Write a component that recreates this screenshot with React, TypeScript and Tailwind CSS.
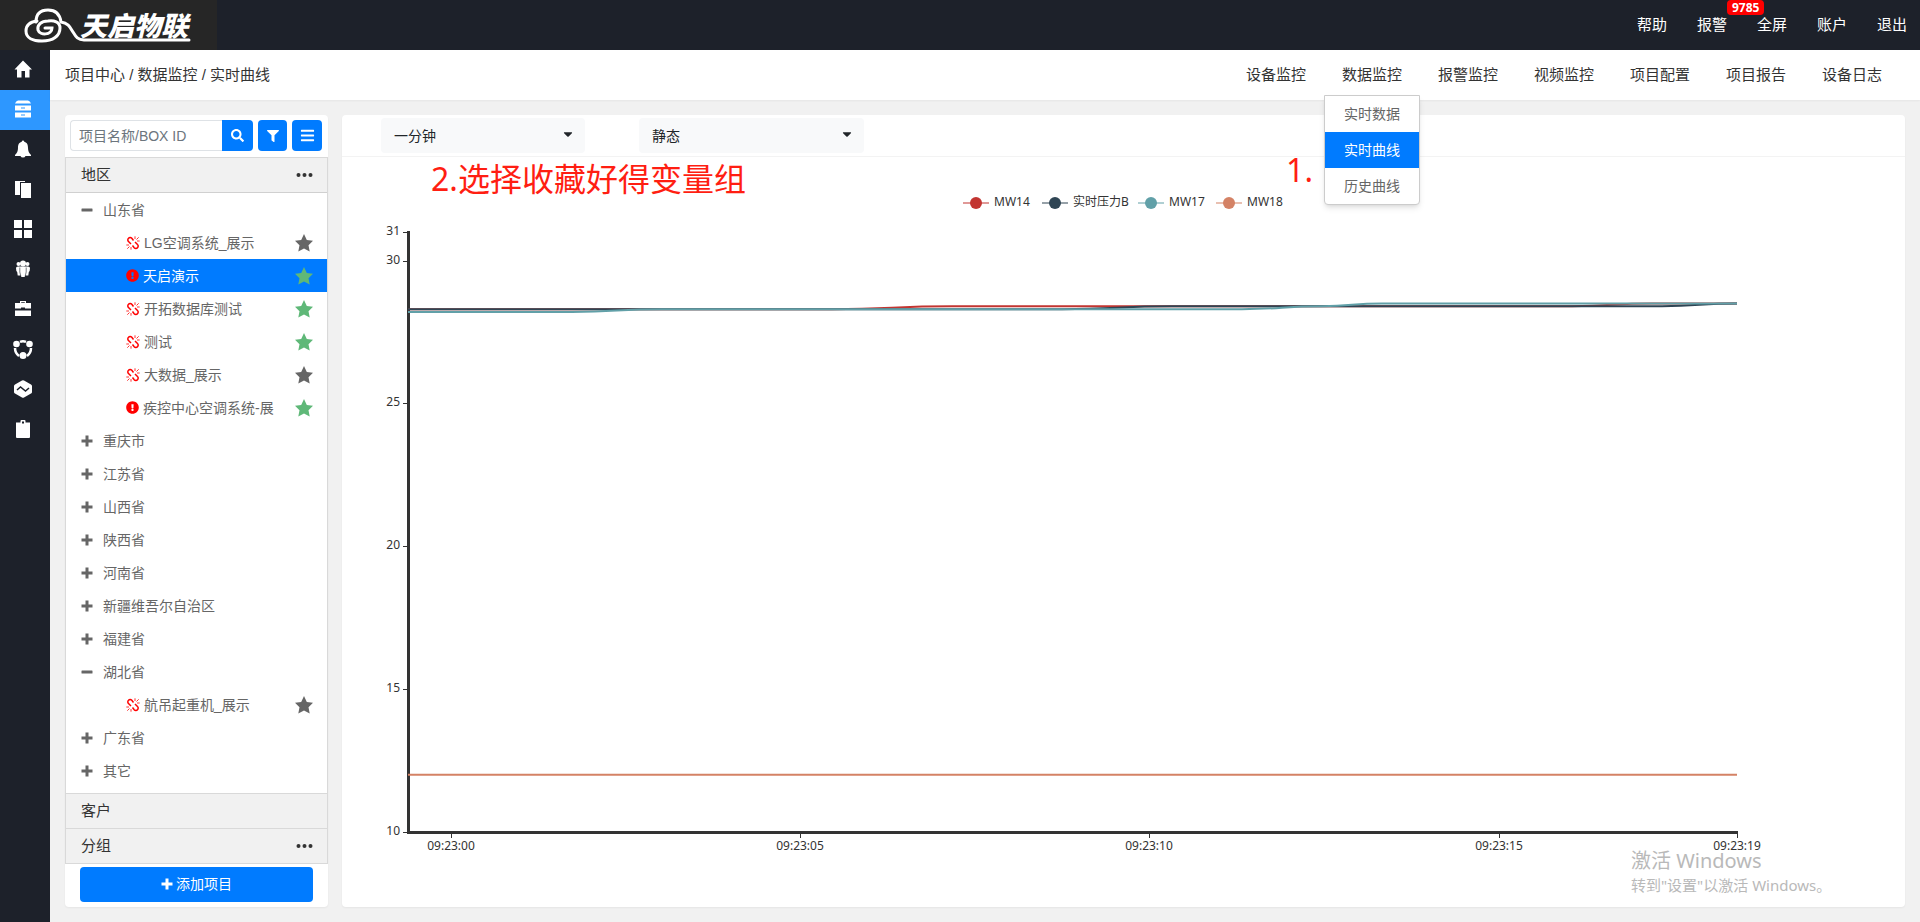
import { useState, type ReactNode } from 'react'
import { FaBars, FaCaretDown, FaExclamationCircle, FaFilter, FaSearch } from 'react-icons/fa'

interface Project { name: string; status: 'offline' | 'alarm'; starred: boolean }
interface Region { name: string; projects?: Project[] }
interface Series { name: string; color: string; points: [number, number][] }

const regions: Region[] = [
  {
    name: '山东省',
    projects: [
      { name: 'LG空调系统_展示', status: 'offline', starred: false },
      { name: '天启演示', status: 'alarm', starred: true },
      { name: '开拓数据库测试', status: 'offline', starred: true },
      { name: '测试', status: 'offline', starred: true },
      { name: '大数据_展示', status: 'offline', starred: false },
      { name: '疾控中心空调系统-展', status: 'alarm', starred: true },
    ],
  },
  { name: '重庆市' },
  { name: '江苏省' },
  { name: '山西省' },
  { name: '陕西省' },
  { name: '河南省' },
  { name: '新疆维吾尔自治区' },
  { name: '福建省' },
  { name: '湖北省', projects: [{ name: '航吊起重机_展示', status: 'offline', starred: false }] },
  { name: '广东省' },
  { name: '其它' },
]

const topLinks = ['帮助', '报警', '全屏', '账户', '退出']
const navLinks = ['设备监控', '数据监控', '报警监控', '视频监控', '项目配置', '项目报告', '设备日志']
const dataMenu = ['实时数据', '实时曲线', '历史曲线']

// [x, value]
const series: Series[] = [
  { name: 'MW14', color: '#c23531', points: [[66, 28.3], [490, 28.3], [610, 28.4], [1230, 28.4], [1310, 28.5], [1395, 28.5]] },
  { name: '实时压力B', color: '#2f4554', points: [[66, 28.3], [720, 28.3], [830, 28.4], [1320, 28.4], [1395, 28.5]] },
  { name: 'MW17', color: '#61a0a8', points: [[66, 28.2], [230, 28.2], [320, 28.3], [900, 28.3], [980, 28.4], [1040, 28.5], [1395, 28.5]] },
  { name: 'MW18', color: '#d48265', points: [[66, 12], [1395, 12]] },
]
const yTicks = [31, 30, 25, 20, 15, 10]
const xTicks: [number, string][] = [[109, '09:23:00'], [458, '09:23:05'], [807, '09:23:10'], [1157, '09:23:15'], [1395, '09:23:19']]
const legendX = [621, 700, 796, 874]

const toY = (v: number) => 675 - ((v - 10) * 600) / 21

function smoothPath(points: [number, number][]) {
  return points
    .map(([x, v], i) => {
      if (i === 0) return `M${x} ${toY(v)}`
      const [px, pv] = points[i - 1]
      const mid = (px + x) / 2
      return `C${mid} ${toY(pv)} ${mid} ${toY(v)} ${x} ${toY(v)}`
    })
    .join('')
}

function Logo() {
  return (
    <svg viewBox="0 0 217 50" className="h-[50px] w-[217px] bg-[#262626]" role="img" aria-label="天启物联">
      <g fill="none" stroke="#fff" strokeWidth="3" strokeLinecap="round">
        <path d="M36 22C36 13 41 10 48 10C56 10 60 15 61 22C68 23 70 27 73 32C76 37 78 40 84 40H189" />
        <path d="M37 21C29 22 26 26 26 31C26 38 33 41 42 41C53 41 60 36 60 28C60 22 54 20 48 21C41 21 37 25 38 30C40 36 52 35 52 28H45" />
      </g>
      <text x="80" y="36" fill="#fff" fontSize="27" fontWeight="900" fontStyle="italic" className="font-['Noto_Sans_CJK_SC',sans-serif]">天启物联</text>
    </svg>
  )
}

function PlusIcon() {
  return (
    <svg viewBox="0 0 12 12" className="size-3" fill="currentColor">
      <path d="M4.500.5h3v4h4v3h-4v4h-3v-4h-4v-3h4Z" />
    </svg>
  )
}

function MinusIcon() {
  return (
    <svg viewBox="0 0 12 12" className="size-3" fill="currentColor">
      <rect x=".5" y="4.500" width="11" height="3" rx=".5" />
    </svg>
  )
}

function DotsIcon() {
  return (
    <svg viewBox="0 0 17 6" className="h-[6px] w-[17px]" fill="currentColor">
      <circle cx="2.500" cy="3" r="2" />
      <circle cx="8.500" cy="3" r="2" />
      <circle cx="14.500" cy="3" r="2" />
    </svg>
  )
}

function StarIcon({ className }: { className: string }) {
  return (
    <svg viewBox="0 0 18 18" className={`size-[18px] ${className}`} fill="currentColor">
      <path d="M9 0 11.800 5.900 18 6.700 13.500 11.200 14.700 17.500 9 14.500 3.300 17.500 4.500 11.200 0 6.700 6.200 5.900Z" />
    </svg>
  )
}

function BrokenLinkIcon() {
  return (
    <svg viewBox="0 0 14 14" className="size-[14px] text-[#f00]" fill="none" stroke="currentColor">
      <path d="M7.500 4.500 5.800 2.300a2.200 2.200 0 0 0-3.300 0 2.200 2.200 0 0 0 0 3.200L5 8M6.500 9.500l1.700 2.200a2.200 2.200 0 0 0 3.300 0 2.200 2.200 0 0 0 0-3.200L9 6" strokeWidth="1.500" />
      <path d="M9 3V.3M10.500 3.500l2.200-2.200M11 5h2.700M5 11v2.700M3.500 10.500l-2.200 2.200M3 9H.3" strokeWidth=".8" />
    </svg>
  )
}

const sideIcons: { label: string; icon: ReactNode }[] = [
  { label: '首页', icon: <path d="M9 .5 18 9.500H15.500V17.500H11V11H7.500V17.500H3V9.500H.5Z" /> },
  {
    label: '项目',
    icon: (
      <>
        <path d="M4 .5h10q2 .5 3 3H1q1-2.500 3-3ZM1 5.500h16v5H1ZM1 12.500h16v5H1Z" />
        <path d="M7 7.500h4v1H7ZM7 14.500h4v1H7Z" fill="#2d97ff" />
      </>
    ),
  },
  { label: '报警', icon: <path d="M9 .5q1 0 1.300 1.200c3 .8 3.700 3.300 3.700 6.300 0 3 1 5 3 7v1h-5.500q-.5 1.500-2.500 1.500t-2.500-1.500H1v-1c2-2 3-4 3-7 0-3 .7-5.500 3.700-6.300Q8 .5 9 .5Z" /> },
  { label: '文件', icon: <path d="M1 1h10v1H6v13H1ZM7 3h10v15H7Z" /> },
  { label: '应用', icon: <path d="M0 0h8v8H0ZM10 0h8v8h-8ZM0 10h8v8H0ZM10 10h8v8h-8Z" /> },
  {
    label: '用户',
    icon: (
      <>
        <circle cx="4.500" cy="4" r="2" />
        <circle cx="13.500" cy="4" r="2" />
        <path d="M2 8q0-1.500 2-1.500H14q2 0 2 1.500 0 3-1.200 4L14.300 15.500H11V17H7v-1.500H3.700L3.200 12Q2 11 2 8Z" />
        <circle cx="9" cy="3.500" r="3" />
        <path d="M5.800 7.500V12l1.200 5M12.200 7.500V12L11 17" stroke="#1d212a" strokeWidth=".6" fill="none" />
      </>
    ),
  },
  { label: '工具', icon: <path fillRule="evenodd" d="M6 3V1h6v2h5v5.500h-6V7.500H7v1H1V3ZM7.200 3h3.600v-.8H7.200ZM1 10.500h16V16H1Z" /> },
  {
    label: '共享',
    icon: (
      <>
        <path d="M6 1.800Q9 .5 12 1.800M1 8q0 5 4 8M17 8q0 5-4 8" fill="none" stroke="currentColor" strokeWidth="2.500" />
        <circle cx="2.500" cy="4" r="3.300" />
        <circle cx="15.500" cy="4" r="3.300" />
        <circle cx="9" cy="15.500" r="3.500" />
      </>
    ),
  },
  {
    label: '趋势',
    icon: (
      <>
        <path d="M8 .5q1-.5 2 0l7 4q1 .5 1 1.500v6q0 1-1 1.500l-7 4q-1 .5-2 0l-7-4Q0 13 0 12V6q0-1 1-1.500Z" />
        <path d="M3 10 6.500 7l5 4L15 8" fill="none" stroke="#1d212a" strokeWidth="1.500" />
      </>
    ),
  },
  { label: '记录', icon: <path fillRule="evenodd" d="M2 2.500h4.500V1Q6.500 0 7.500 0h3q1 0 1 1v1.500H16V17q0 1-1 1H3q-1 0-1-1ZM8 1.500v2h2v-2Z" /> },
]

function SideBar() {
  return (
    <nav aria-label="主菜单" className="w-[50px] shrink-0 bg-[#1d212a]">
      {sideIcons.map((item, i) => (
        <a
          key={item.label}
          href="#"
          aria-label={item.label}
          className={`flex h-10 items-center justify-center pr-1 pb-[2px] text-white ${i === 1 ? 'bg-[#2d97ff]' : ''}`}
        >
          <svg viewBox="0 0 18 18" className="size-[18px] overflow-visible" fill="currentColor">{item.icon}</svg>
        </a>
      ))}
    </nav>
  )
}

function SubBar() {
  return (
    <div className="relative z-10 flex h-[50px] items-center justify-between bg-white pr-5 pl-[15px] text-[15px] text-[#333] shadow-xs">
      <div>项目中心 / 数据监控 / 实时曲线</div>
      <nav aria-label="项目" className="flex">
        {navLinks.map((name, i) => (
          <div key={name} className="relative w-24 text-center">
            <a href="#">{name}</a>
            {i === 1 && (
              <ul className="absolute top-[31px] left-0 w-full rounded-b border border-[#ccc] bg-white text-sm text-[#666] shadow-md">
                {dataMenu.map((m, j) => (
                  <li key={m}>
                    <a href="#" className={`flex h-9 items-center justify-center ${j === 1 ? 'bg-[#007bff] text-white' : ''}`}>{m}</a>
                  </li>
                ))}
              </ul>
            )}
          </div>
        ))}
      </nav>
    </div>
  )
}

function ProjectRow({ project, selected, onSelect }: { project: Project; selected: boolean; onSelect: () => void }) {
  return (
    <li className={`flex h-[33px] items-center pr-[14px] ${selected ? 'bg-[#007bff] text-white' : ''}`}>
      <button type="button" onClick={onSelect} className="flex flex-1 items-center gap-1 pl-[60px] text-left">
        {project.status === 'offline' ? <BrokenLinkIcon /> : <FaExclamationCircle size={13} className="text-[#f00]" />}
        {project.name}
      </button>
      <button type="button" aria-label="收藏">
        <StarIcon className={project.starred ? 'text-[#5fb878]' : 'text-[#666]'} />
      </button>
    </li>
  )
}

function ProjectPanel() {
  const [selected, setSelected] = useState('天启演示')
  const [open, setOpen] = useState(['山东省', '湖北省'])
  const toggle = (name: string) => setOpen(o => (o.includes(name) ? o.filter(n => n !== name) : [...o, name]))

  return (
    <aside className="flex w-[263px] shrink-0 flex-col rounded-sm bg-white shadow-xs">
      <div className="flex gap-[5px] p-[5px] pb-[6px]">
        <div className="flex h-[31px] w-[183px]">
          <input
            aria-label="项目名称"
            placeholder="项目名称/BOX ID"
            className="min-w-0 flex-1 rounded-l border border-r-0 border-[#dee2e6] px-2 text-sm placeholder:text-[#6c757d]"
          />
          <button type="button" aria-label="搜索" className="flex w-[31px] items-center justify-center rounded-r bg-[#007bff] text-white">
            <FaSearch size={13} />
          </button>
        </div>
        <button type="button" aria-label="筛选" className="flex h-[31px] w-[29px] items-center justify-center rounded bg-[#007bff] text-white">
          <FaFilter size={12} />
        </button>
        <button type="button" aria-label="列表" className="flex h-[31px] w-[30px] items-center justify-center rounded bg-[#007bff] text-white">
          <FaBars size={15} />
        </button>
      </div>

      <div className="flex flex-1 flex-col border border-[#d9d9d9]">
        <div className="flex h-[35px] items-center justify-between border-b border-[#d0d0d0] bg-[#f1f1f1] pr-[14px] pl-[15px] text-[15px] text-[#333]">
          <button type="button">地区</button>
          <button type="button" aria-label="更多"><DotsIcon /></button>
        </div>
        <ul className="flex-1 text-sm text-[#666]">
          {regions.map(region => (
            <li key={region.name}>
              <button type="button" onClick={() => toggle(region.name)} className="flex h-[33px] w-full items-center gap-[10px] pl-[15px]">
                {open.includes(region.name) ? <MinusIcon /> : <PlusIcon />}
                {region.name}
              </button>
              {open.includes(region.name) && region.projects && (
                <ul>
                  {region.projects.map(p => (
                    <ProjectRow key={p.name} project={p} selected={p.name === selected} onSelect={() => setSelected(p.name)} />
                  ))}
                </ul>
              )}
            </li>
          ))}
        </ul>
        <div className="flex h-[35px] items-center border-t border-[#d9d9d9] bg-[#f1f1f1] pl-[15px] text-[15px] text-[#333]">
          <button type="button">客户</button>
        </div>
        <div className="flex h-[35px] items-center justify-between border-t border-[#d9d9d9] bg-[#f1f1f1] pr-[14px] pl-[15px] text-[15px] text-[#333]">
          <button type="button">分组</button>
          <button type="button" aria-label="更多"><DotsIcon /></button>
        </div>
      </div>

      <div className="px-[15px] pt-[3px] pb-[5px]">
        <button type="button" className="flex h-[35px] w-full items-center justify-center gap-[3px] rounded bg-[#007bff] pb-px text-sm text-white">
          <PlusIcon />
          添加项目
        </button>
      </div>
    </aside>
  )
}

function Chart() {
  return (
    <svg viewBox="0 0 1563 749" className="block w-full font-['Noto_Sans','Noto_Sans_CJK_SC',sans-serif]" fontSize="12" role="img" aria-label="实时曲线">
      {series.map((s, i) => (
        <g key={s.name}>
          <path d={`M${legendX[i]} 46h26`} stroke={s.color} strokeWidth="2" opacity=".5" />
          <circle cx={legendX[i] + 13} cy="46" r="6" fill={s.color} />
          <text x={legendX[i] + 31} y="49" fill="#333">{s.name}</text>
        </g>
      ))}

      {yTicks.map(v => (
        <g key={v}>
          <path d={`M61 ${Math.round(toY(v)) + 0.5}h5`} stroke="#333" />
          <text x="58" y={Math.round(toY(v)) + 3} textAnchor="end" fill="#333">{v}</text>
        </g>
      ))}
      {xTicks.map(([x, label]) => (
        <g key={label}>
          <path d={`M${x + 0.5} 675v6`} stroke="#333" />
          <text x={x} y="693" textAnchor="middle" fill="#333">{label}</text>
        </g>
      ))}
      <path d="M66.500 74V675.500H1396" fill="none" stroke="#333" strokeWidth="3" />

      {series.map(s => (
        <path key={s.name} d={smoothPath(s.points)} fill="none" stroke={s.color} strokeWidth="2" />
      ))}
    </svg>
  )
}

function ChartPanel() {
  return (
    <main className="relative min-w-0 flex-1 rounded-sm bg-white shadow-xs">
      <div className="flex h-[42px] items-center gap-[54px] border-b border-[#f3f3f3] pl-[39px] text-sm text-[#212529]">
        <div className="relative">
          <select aria-label="时长" className="h-[35px] w-[204px] appearance-none rounded bg-[#f8f9fa] px-[13px]">
            <option>一分钟</option>
          </select>
          <FaCaretDown size={14} className="pointer-events-none absolute top-[9px] right-[10px]" />
        </div>
        <div className="relative">
          <select aria-label="模式" className="h-[35px] w-[225px] appearance-none rounded bg-[#f8f9fa] px-[13px]">
            <option>静态</option>
          </select>
          <FaCaretDown size={14} className="pointer-events-none absolute top-[9px] right-[10px]" />
        </div>
      </div>
      <Chart />
      <p className="absolute top-[40px] left-[89px] font-['Noto_Sans','Noto_Sans_CJK_SC',sans-serif] text-[32px] leading-[48px] text-[#ff1e12]">2.选择收藏好得变量组</p>
      <p className="absolute top-[31px] right-[592px] font-['Noto_Sans',sans-serif] text-[32px] leading-[48px] text-[#ff1e12]">1.</p>
      <div className="absolute right-[79px] bottom-3 w-[195px] font-['Noto_Sans','Noto_Sans_CJK_SC',sans-serif] whitespace-nowrap text-[#b9b9b9]">
        <p className="text-xl leading-7">激活 Windows</p>
        <p className="text-[15px] leading-5">转到"设置"以激活 Windows。</p>
      </div>
    </main>
  )
}

export default function App() {
  return (
    <div className="flex min-h-screen flex-col bg-[#f1f1f1] font-['Liberation_Sans','Noto_Sans_CJK_SC',sans-serif]">
      <header className="flex h-[50px] items-start justify-between bg-[#1d212a]">
        <Logo />
        <nav aria-label="账户" className="flex h-[50px] items-center gap-[30px] pr-[13px] text-[15px] text-white">
          {topLinks.map((name, i) => (
            <a key={name} href="#" className="relative">
              {name}
              {i === 1 && (
                <span className="absolute -top-[14px] left-[30px] h-[15px] rounded bg-[#f00] px-[5px] font-['Noto_Sans',sans-serif] text-xs leading-[15px] font-bold">9785</span>
              )}
            </a>
          ))}
        </nav>
      </header>
      <div className="flex flex-1">
        <SideBar />
        <div className="flex min-w-0 flex-1 flex-col">
          <SubBar />
          <div className="flex flex-1 gap-[14px] p-[15px]">
            <ProjectPanel />
            <ChartPanel />
          </div>
        </div>
      </div>
    </div>
  )
}
